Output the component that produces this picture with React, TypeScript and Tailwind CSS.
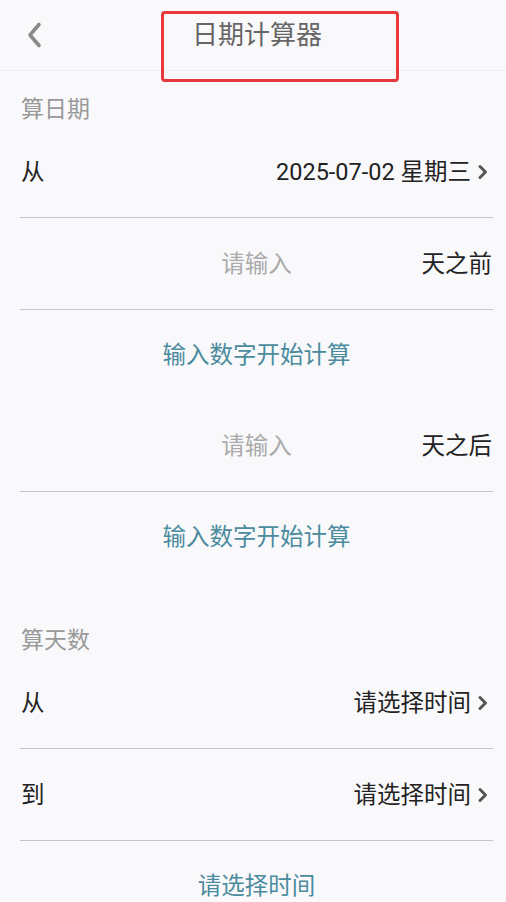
import React from 'react';

const font = { fontFamily: 'Roboto, "Noto Sans CJK SC", sans-serif' };

const Chevron: React.FC = () => (
  <svg width="12" height="16" viewBox="0 0 12 16" className="ml-[6px] mr-[4px] shrink-0">
    <path d="M3 2.5 L8.5 8 L3 13.5" fill="none" stroke="#555" strokeWidth="3" strokeLinecap="round" strokeLinejoin="round" />
  </svg>
);

const SectionLabel: React.FC<{ text: string; top: string }> = ({ text, top }) => (
  <div className={`px-[21px] ${top} pb-[4px] text-[23px] leading-[24px] text-[#999]`}>{text}</div>
);

const PickRow: React.FC<{ label: string; value: string }> = ({ label, value }) => (
  <div className="ml-[20px] mr-[13px] h-[92px] flex items-center justify-between border-b border-[#c6c6c8]">
    <span className="pl-[1px] text-[23.5px] leading-[24px] text-[#222]">{label}</span>
    <span className="flex items-center text-[23.5px] leading-[24px] text-[#222]">
      {value}
      <Chevron />
    </span>
  </div>
);

const InputRow: React.FC<{ suffix: string }> = ({ suffix }) => (
  <div className="ml-[20px] mr-[13px] h-[92px] grid grid-cols-[1fr_auto_1fr] items-center border-b border-[#c6c6c8]">
    <div />
    <span className="text-[23.5px] leading-[24px] text-[#aaa]">请输入</span>
    <span className="justify-self-end pr-[1px] text-[23.5px] leading-[24px] text-[#222]">{suffix}</span>
  </div>
);

const Hint: React.FC<{ text: string }> = ({ text }) => (
  <div className="ml-[20px] mr-[13px] h-[90px] flex items-center justify-center text-[23.5px] leading-[24px] text-[#4b8b9e]">
    {text}
  </div>
);

export default function App() {
  return (
    <div className="relative w-[506px] h-[902px] overflow-hidden bg-[#f9f9fb]" style={font}>
      <div className="relative h-[71px] flex items-center justify-center border-b border-[#efeff1]">
        <svg width="20" height="30" viewBox="0 0 20 30" className="absolute left-[25px] top-[20px]">
          <path d="M14 4.5 L5 15 L14 25.5" fill="none" stroke="#8a8a8a" strokeWidth="3.6" strokeLinecap="round" strokeLinejoin="round" />
        </svg>
        <span className="pl-[8px] text-[26px] leading-[26px] text-[#666]">日期计算器</span>
      </div>
      <div className="absolute left-[161px] top-[11px] w-[238px] h-[71px] border-[3px] border-[#e8383d] rounded-[4px]" />

      <SectionLabel text="算日期" top="pt-[27px]" />
      <PickRow label="从" value="2025-07-02 星期三" />
      <InputRow suffix="天之前" />
      <Hint text="输入数字开始计算" />
      <InputRow suffix="天之后" />
      <Hint text="输入数字开始计算" />

      <SectionLabel text="算天数" top="pt-[47px]" />
      <PickRow label="从" value="请选择时间" />
      <PickRow label="到" value="请选择时间" />
      <Hint text="请选择时间" />
    </div>
  );
}
